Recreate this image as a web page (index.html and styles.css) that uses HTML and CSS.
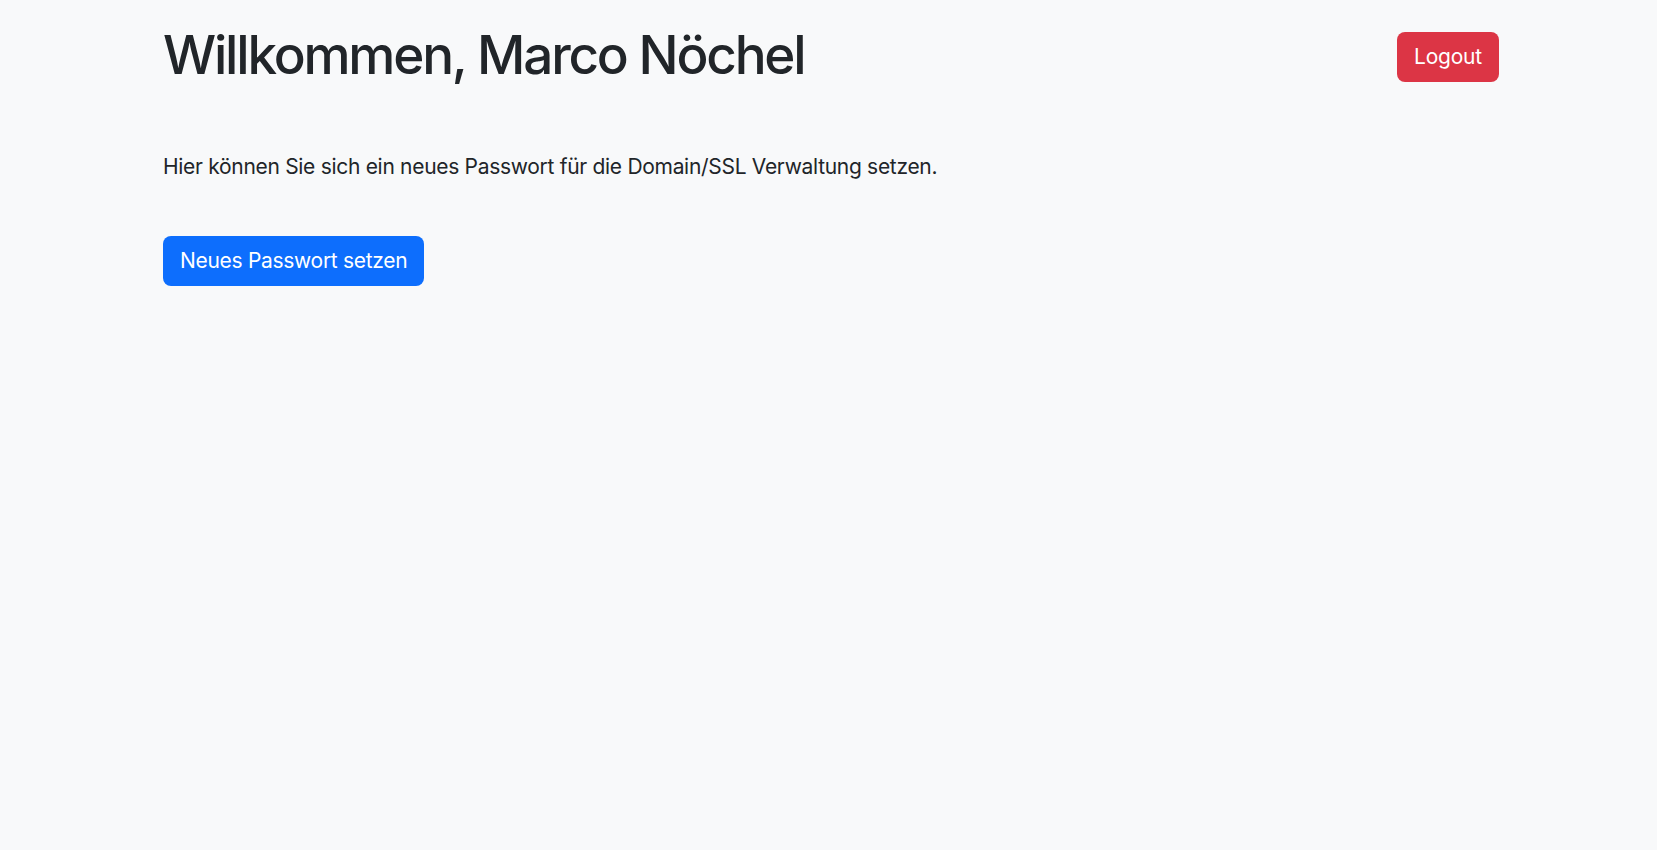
FILE: index.html
```html
<!DOCTYPE html>
<html lang="de">
<head>
    <meta charset="UTF-8">
    <meta name="viewport" content="width=device-width, initial-scale=1.0">
    <title>Passwort Verwaltung</title>
    <link rel="stylesheet" href="styles.css">
</head>
<body>
    <div class="container">
        <!-- Header with greeting and logout -->
        <div class="header">
            <h1 class="title">Willkommen, Marco Nöchel</h1>
            <button class="btn btn-danger">Logout</button>
        </div>

        <p class="intro">Hier können Sie sich ein neues Passwort für die Domain/SSL Verwaltung setzen.</p>

        <button class="btn btn-primary">Neues Passwort setzen</button>
    </div>
</body>
</html>
```

FILE: styles.css
```css
body {
    margin: 0;
    font-family: Inter, "Liberation Sans", sans-serif;
    background-color: #f8f9fa;
    color: #212529;
    height: 100vh;
}

.container {
    padding: 0 158px 0 163px;
}

/* Header */
.header {
    display: flex;
    justify-content: space-between;
    align-items: flex-start;
    padding-top: 32px;
}

.title {
    margin: -3px 0 0;
    font-size: 53px;
    font-weight: 500;
    line-height: 1;
    letter-spacing: -2.2px;
}

.intro {
    margin: 69px 0 0;
    font-size: 21px;
    line-height: 1.5;
    letter-spacing: -0.3px;
}

/* Buttons */
.btn {
    font-family: inherit;
    font-size: 21px;
    line-height: 1.5;
    padding: 9px 17px;
    border: none;
    border-radius: 8px;
    color: #fff;
    letter-spacing: -0.2px;
    height: 50px;
    cursor: pointer;
}

.btn-danger {
    background-color: #dc3545;
}

.btn-primary {
    background-color: #0d6efd;
    margin-top: 53px;
    letter-spacing: -0.3px;
}
```
